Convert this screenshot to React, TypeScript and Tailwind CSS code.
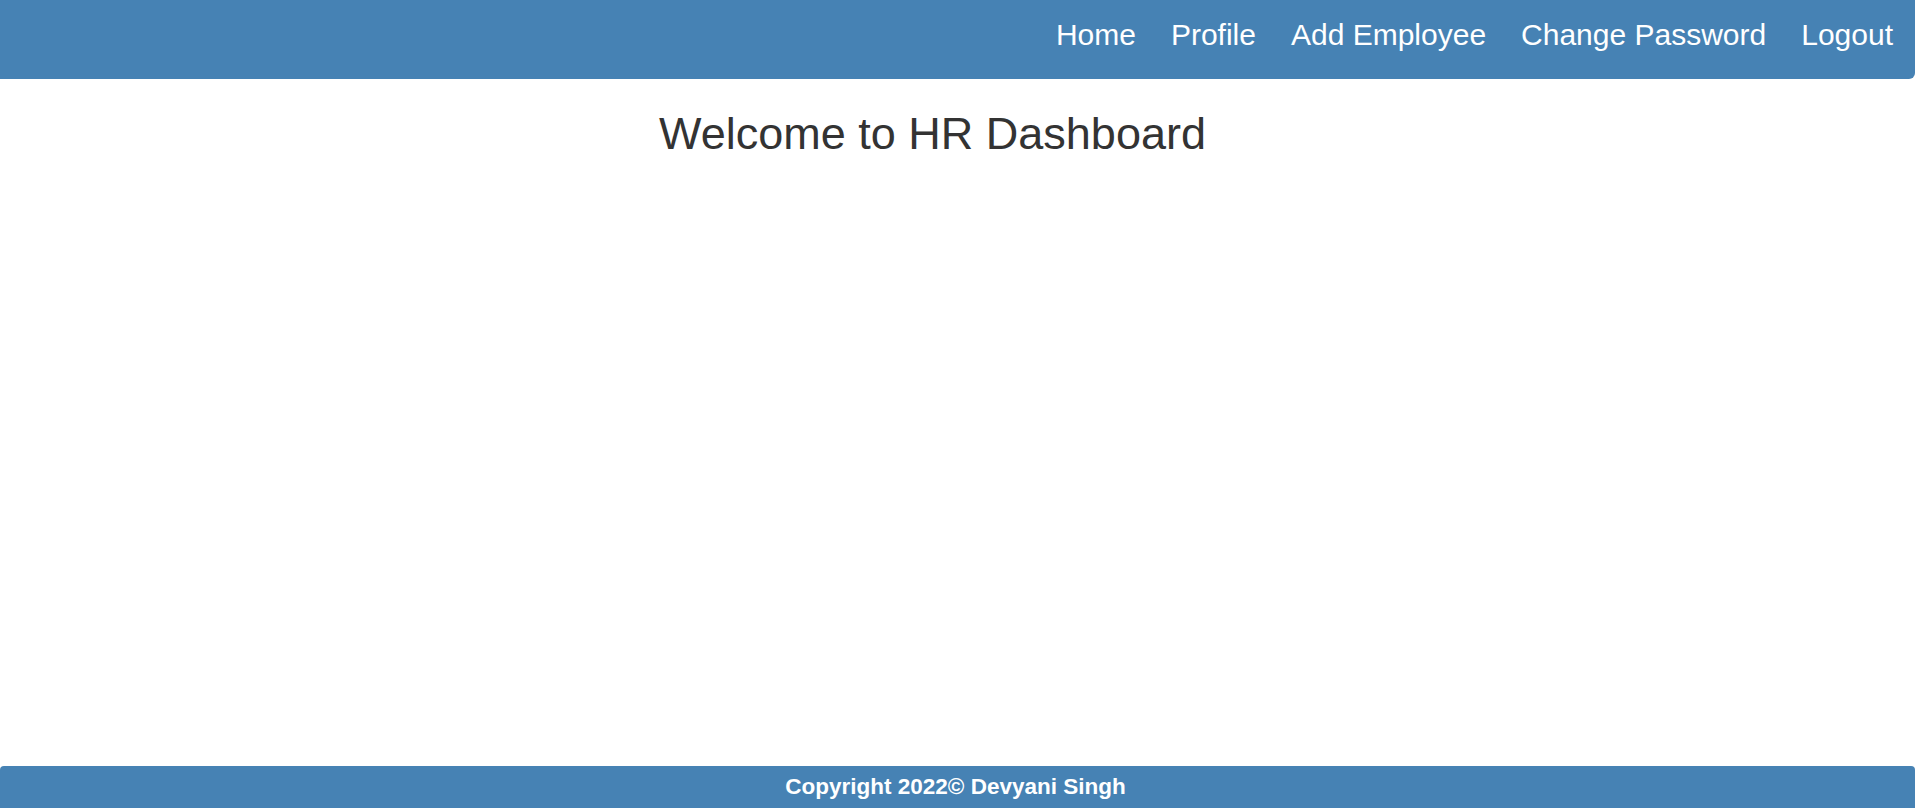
const links = ['Home', 'Profile', 'Add Employee', 'Change Password', 'Logout'];

export default function App() {
  return (
    <div className="min-h-screen flex flex-col bg-white font-['Liberation_Sans',Arial,sans-serif]">
      <nav className="h-[79px] bg-[#4682b4] rounded-br-[6px] flex justify-end items-start pt-[18px] pr-[22px]">
        <ul className="flex gap-[35px]">
          {links.map((l) => (
            <li key={l}>
              <a href="#" className="text-white text-[30px] leading-[34px]">
                {l}
              </a>
            </li>
          ))}
        </ul>
      </nav>

      <main className="flex-1">
        <h1 className="mt-[32px] pr-[50px] text-center text-[45px] leading-none font-normal text-[#333333]">
          Welcome to HR Dashboard
        </h1>
      </main>

      <footer className="h-[42px] bg-[#4682b4] rounded-t-[4px] pt-[10px] pr-[4px] text-center text-white font-bold text-[22.5px] leading-none">
        Copyright 2022© Devyani Singh
      </footer>
    </div>
  );
}
